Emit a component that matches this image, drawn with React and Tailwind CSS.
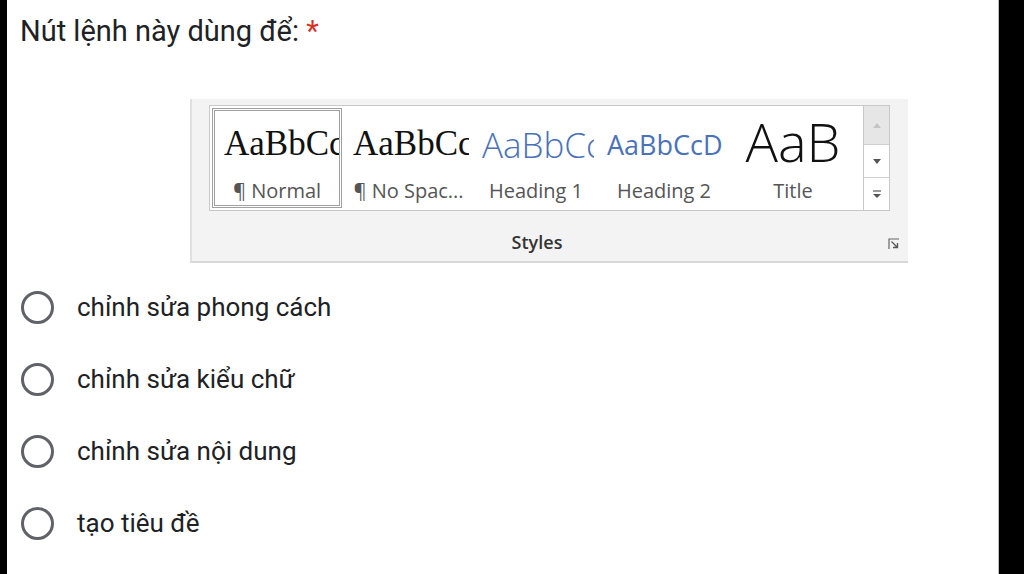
import React from "react";

const options = [
  "chỉnh sửa phong cách",
  "chỉnh sửa kiểu chữ",
  "chỉnh sửa nội dung",
  "tạo tiêu đề",
];

function StyleItem({ sample, label, sampleClass, selected, width }) {
  return (
    <div
      className={`${width} h-full shrink-0 flex flex-col items-center overflow-hidden ${
        selected ? "border-[3px] border-double border-[#a0a0a0] bg-white" : "border-[3px] border-transparent"
      }`}
    >
      <div className={`h-[60px] w-full flex items-end overflow-hidden whitespace-nowrap ${sampleClass}`}>
        {sample}
      </div>
      <div className="mt-[8px] text-[20px] leading-[24px] text-[#555] whitespace-nowrap font-['Open_Sans',sans-serif]">
        {label}
      </div>
    </div>
  );
}

function StylesRibbon() {
  return (
    <div className="ml-[183px] mt-[48px] w-[718px] h-[164px] bg-[#f3f3f3] border-l-2 border-[#e0e0e0] border-b-2 border-b-[#d8d8d8] flex flex-col">
      <div className="mt-[6px] ml-[17px] flex">
        <div className="w-[655px] h-[106px] bg-white border border-[#c8c8c8] flex items-stretch p-[2px] gap-[3px]">
          <StyleItem
            selected
            width="w-[130px]"
            sample="AaBbCc"
            label="¶ Normal"
            sampleClass="text-[35px] leading-[40px] pb-[7px] text-[#111] font-['Liberation_Serif',serif] justify-start pl-[9px]"
          />
          <StyleItem
            width="w-[127px]"
            sample="AaBbCc"
            label="¶ No Spac..."
            sampleClass="text-[35px] leading-[40px] pb-[7px] text-[#111] font-['Liberation_Serif',serif] justify-start pl-[5px]"
          />
          <StyleItem
            width="w-[122px]"
            sample="AaBbCc"
            label="Heading 1"
            sampleClass="text-[35px] leading-[40px] pb-[6px] text-[#4a72b8] font-['Open_Sans',sans-serif] font-light justify-start pl-[4px]"
          />
          <StyleItem
            width="w-[128px]"
            sample="AaBbCcD"
            label="Heading 2"
            sampleClass="text-[27px] leading-[34px] pb-[9px] text-[#4a72b8] font-['Open_Sans',sans-serif] justify-start pl-[4px]"
          />
          <StyleItem
            width="w-[124px]"
            sample="AaB"
            label="Title"
            sampleClass="text-[54px] leading-[60px] pb-[0px] text-[#111] font-['Open_Sans',sans-serif] font-light justify-center"
          />
        </div>
        <div className="w-[26px] h-[106px] border border-l-0 border-[#c8c8c8] flex flex-col">
          <div className="h-[39px] bg-[#e6e6e6] border-b border-[#d0d0d0] flex items-center justify-center">
            <svg width="8" height="5" viewBox="0 0 8 5"><path d="M0 5 L4 0 L8 5 Z" fill="#c4c4c4" /></svg>
          </div>
          <div className="h-[33px] bg-white border-b border-[#d0d0d0] flex items-center justify-center">
            <svg width="8" height="5" viewBox="0 0 8 5"><path d="M0 0 L8 0 L4 5 Z" fill="#555" /></svg>
          </div>
          <div className="flex-1 bg-white flex items-center justify-center">
            <svg width="10" height="9" viewBox="0 0 10 9">
              <path d="M1 1 H9" stroke="#555" strokeWidth="1.2" />
              <path d="M1 4 L9 4 L5 8 Z" fill="#555" />
            </svg>
          </div>
        </div>
      </div>
      <div className="flex-1 relative">
        <div className="mt-[19px] w-full text-center text-[18px] leading-[24px] text-[#333] font-semibold font-['Open_Sans',sans-serif] pr-[26px]">
          Styles
        </div>
        <svg className="absolute right-[8px] top-[27px]" width="12" height="12" viewBox="0 0 12 12">
          <path d="M1 11 V1 H11" stroke="#666" strokeWidth="1.2" fill="none" />
          <path d="M3.5 3.5 L9.5 9.5 M9.5 5 V9.5 H5" stroke="#555" strokeWidth="1.3" fill="none" />
        </svg>
      </div>
    </div>
  );
}

export default function App() {
  return (
    <div className="w-[1024px] h-[574px] bg-black flex font-['Roboto',sans-serif]">
      <div className="ml-[7px] w-[992px] h-full bg-white flex flex-col border-r border-[#bbb]">
        <div className="ml-[13px] mt-[11px] text-[29px] leading-[40px] text-[#202124]">
          Nút lệnh này dùng để: <span className="text-[#d93025]">*</span>
        </div>
        <StylesRibbon />
        <div className="mt-[8px] flex flex-col">
          {options.map((o) => (
            <div key={o} className="h-[72px] flex items-center ml-[14px]">
              <div className="w-[33px] h-[33px] rounded-full border-[3px] border-[#5f6368]" />
              <div className="ml-[23px] text-[26px] leading-[32px] text-[#202124]">{o}</div>
            </div>
          ))}
        </div>
      </div>
    </div>
  );
}
